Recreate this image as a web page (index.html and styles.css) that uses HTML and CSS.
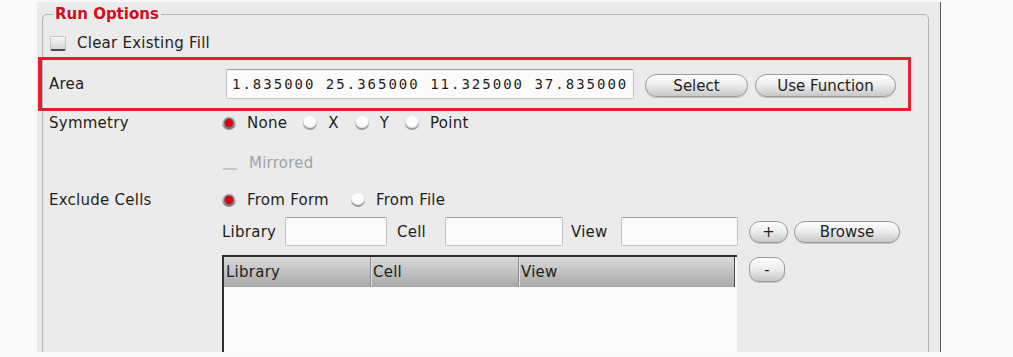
FILE: index.html
```html
<!DOCTYPE html>
<html lang="en">
<head>
    <meta charset="UTF-8">
    <meta name="viewport" content="width=device-width, initial-scale=1.0">
    <title>Run Options</title>
    <link rel="stylesheet" href="styles.css">
</head>
<body>
    <div class="window">
        <fieldset class="group">
            <legend>Run Options</legend>

            <div class="row row-clear">
                <label class="check"><span class="box"></span>Clear Existing Fill</label>
            </div>

            <div class="row row-area highlight">
                <span class="label">Area</span>
                <div class="controls">
                    <input type="text" class="field area-field" value="1.835000 25.365000 11.325000 37.835000">
                    <button class="pill btn-select">Select</button>
                    <button class="pill btn-function">Use Function</button>
                </div>
            </div>

            <div class="row row-symmetry">
                <span class="label">Symmetry</span>
                <div class="options">
                    <label class="radio"><span class="dot on"></span>None</label>
                    <label class="radio"><span class="dot"></span>X</label>
                    <label class="radio"><span class="dot"></span>Y</label>
                    <label class="radio"><span class="dot"></span>Point</label>
                </div>
            </div>

            <div class="row row-mirror">
                <span class="label"></span>
                <label class="check disabled"><span class="box off"></span>Mirrored</label>
            </div>

            <div class="row row-exclude">
                <span class="label">Exclude Cells</span>
                <div class="options">
                    <label class="radio"><span class="dot on"></span>From Form</label>
                    <label class="radio"><span class="dot"></span>From File</label>
                </div>
            </div>

            <div class="row row-cells">
                <span class="label"></span>
                <div class="controls">
                    <span class="cap cap-lib">Library</span>
                    <input type="text" class="field lib-field">
                    <span class="cap cap-cell">Cell</span>
                    <input type="text" class="field cell-field">
                    <span class="cap cap-view">View</span>
                    <input type="text" class="field view-field">
                    <button class="pill btn-plus">+</button>
                    <button class="pill btn-browse">Browse</button>
                </div>
            </div>

            <div class="row row-list">
                <span class="label"></span>
                <div class="controls list-controls">
                    <div class="list">
                        <div class="list-head">
                            <span>Library</span>
                            <span>Cell</span>
                            <span>View</span>
                        </div>
                    </div>
                    <button class="pill btn-minus">-</button>
                </div>
            </div>
        </fieldset>
    </div>
</body>
</html>
```

FILE: styles.css
```css
body {
    margin: 0;
    background: #fafafa;
    font-family: "DejaVu Sans", "Noto Sans", sans-serif;
    font-size: 15px;
    letter-spacing: 0.25px;
    color: #1e1e1e;
}
.window {
    margin: 2px 0 0 37px;
    width: 904px;
    height: 350px;
    box-sizing: border-box;
    padding-top: 3px;
    background: #ebebeb;
    border-right: 1px solid #5a5a5a;
    overflow: hidden;
}
.group {
    margin: 0 0 0 5px;
    width: 887px;
    height: 420px;
    box-sizing: border-box;
    min-inline-size: 0;
    padding: 0 0 0 6px;
    border: 1px solid #b4b4b4;
    border-radius: 5px;
}
.group legend {
    margin-left: 4px;
    padding: 0 2px;
    line-height: 18px;
    font-weight: bold;
    letter-spacing: 0;
    color: #cc1020;
}
.row {
    display: grid;
    grid-template-columns: 173px 1fr;
    align-items: center;
}
.row-clear { height: 40px; }
.row-area { height: 42px; }
.row-symmetry { height: 36px; }
.row-mirror { height: 43px; }
.row-exclude { height: 32px; }
.row-cells { height: 31px; }
.row-list { margin-top: 8px; align-items: start; }

.highlight {
    position: relative;
}
.highlight::after {
    content: "";
    position: absolute;
    top: -6px;
    bottom: -6px;
    left: -11px;
    right: 17px;
    border: 3px solid #e5202e;
    border-left-width: 4px;
    pointer-events: none;
}
.controls {
    display: flex;
    align-items: center;
}
.list-controls {
    align-items: flex-start;
}
.options {
    display: flex;
    align-items: center;
    gap: 16px;
}
.row-exclude .options {
    gap: 22px;
}

/* checkboxes and radios */
.check, .radio {
    display: flex;
    align-items: center;
    gap: 11px;
}
.row-clear .check { margin-left: 1px; }
.box {
    width: 16px;
    height: 15px;
    box-sizing: border-box;
    border-radius: 2px;
    border: 1px solid #c4c4c4;
    border-bottom: 2px solid #4c4c4c;
    background: linear-gradient(#f7f7f7, #d6d6d6);
}
.box.off {
    border-color: transparent;
    border-bottom: 2px solid #c6c6c6;
    background: transparent;
}
.disabled { color: #a2a2a2; }
.dot {
    width: 14px;
    height: 14px;
    border-radius: 50%;
    background: radial-gradient(circle at 50% 35%, #fdfdfd 45%, #d2d2d2 100%);
    box-shadow: inset 0 -2px 1px rgba(0, 0, 0, 0.35);
}
.dot.on {
    background: radial-gradient(circle at 50% 50%, #dc0010 0 3.5px, #6e6e6e 4.5px, #b0b0b0 5.5px, #f0f0f0 7px);
}

/* text fields */
.field {
    box-sizing: border-box;
    margin: 0;
    padding: 0 5px;
    border: 1px solid #c2c2c2;
    border-top-color: #9c9c9c;
    border-radius: 2px;
    background: #fbfbfb;
    font: inherit;
    color: #1e1e1e;
    outline: none;
}
.area-field {
    margin-left: 4px;
    width: 408px;
    height: 30px;
    font-family: "DejaVu Sans Mono", monospace;
    font-size: 14px;
    letter-spacing: 2px;
}
.lib-field { width: 102px; height: 29px; margin-right: 10px; }
.cell-field { width: 118px; height: 29px; margin-right: 8px; }
.view-field { width: 117px; height: 29px; margin-right: 11px; }
.cap-lib { width: 63px; }
.cap-cell { width: 48px; }
.cap-view { width: 50px; }

/* pill buttons */
.pill {
    box-sizing: border-box;
    height: 23px;
    padding: 0;
    border: 1px solid #9a9a9a;
    border-radius: 12px;
    background: linear-gradient(#fefefe 0%, #eeeeee 45%, #c8c8c8 100%);
    box-shadow: 0 1px 0 #c4c4c4;
    font: inherit;
    color: #1e1e1e;
}
.btn-select { width: 103px; margin-left: 11px; margin-top: 3px; }
.btn-function { width: 141px; margin-left: 7px; margin-top: 3px; }
.btn-plus { width: 39px; height: 22px; }
.btn-browse { width: 106px; height: 22px; margin-left: 6px; }
.btn-minus { width: 36px; height: 25px; margin: 2px 0 0 12px; border-radius: 10px; }

/* exclude list */
.list {
    width: 515px;
    height: 110px;
    box-sizing: border-box;
    border-top: 2px solid #2e2e2e;
    border-left: 2px solid #2e2e2e;
    background: #fbfbfb;
}
.list-head {
    display: grid;
    grid-template-columns: 147px 148px 1fr;
    height: 30px;
    margin-right: 2px;
    background: linear-gradient(#dadada, #a8a8a8);
    border-right: 1px solid #4a4a4a;
}
.list-head span {
    padding-left: 2px;
    line-height: 30px;
    color: #222;
    border-right: 1px solid #8a8a8a;
    box-shadow: 1px 0 0 #e4e4e4;
}
.list-head span:last-child {
    border-right: none;
    box-shadow: none;
}
```
